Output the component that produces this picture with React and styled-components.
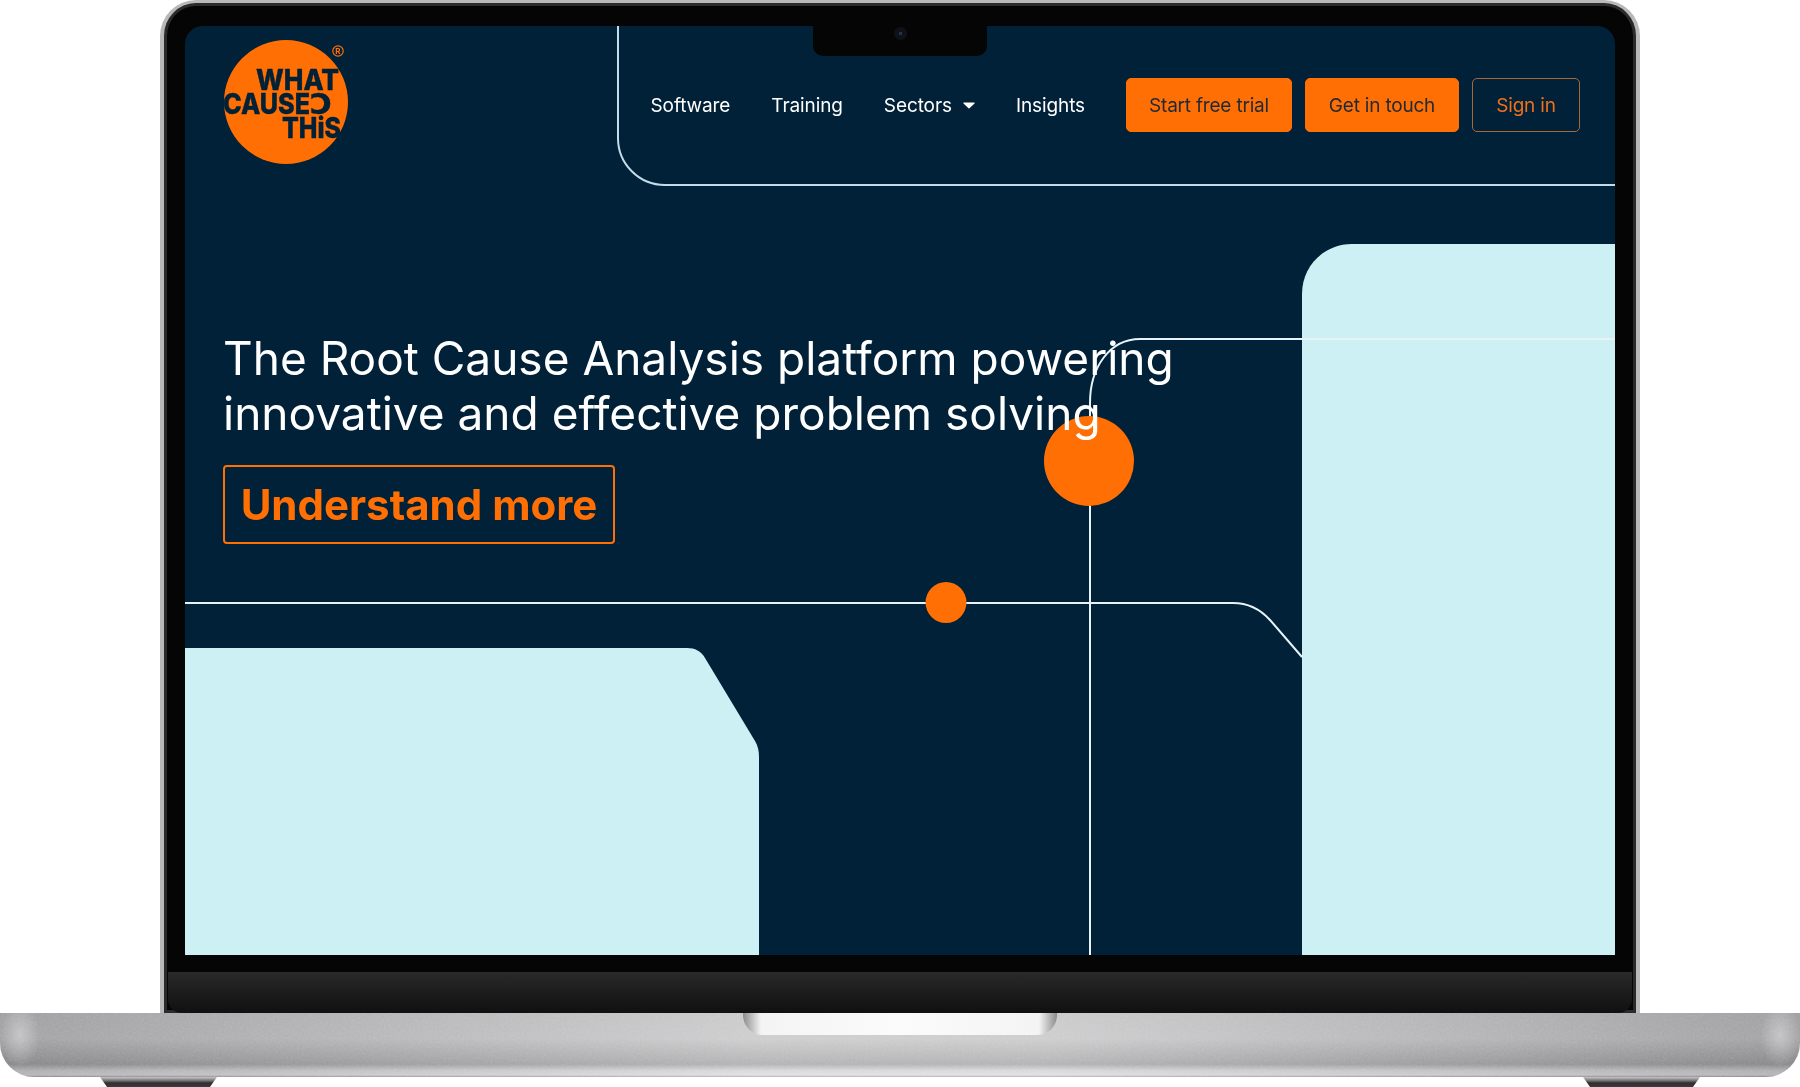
import * as React from "react"
import styled, { createGlobalStyle } from "styled-components"

const GlobalStyle = createGlobalStyle`
  html, body {
    background: #fff;
    margin: 0;
    padding: 0;
  }
`

const Page = styled.div`
  display: flex;
  flex-direction: column;
  font-family: "Inter", "Liberation Sans", sans-serif;
  font-variant-ligatures: none;
  height: 1087px;
  overflow: hidden;
  width: 1800px;
`

const Lid = styled.div`
  background: #050505;
  border: solid #b9b9bb;
  border-radius: 36px 36px 0 0;
  border-width: 3px 4px 0;
  box-shadow: inset 0 0 0 3px #2b2b2b;
  box-sizing: border-box;
  display: flex;
  flex-direction: column;
  height: 1013px;
  margin-left: 160px;
  overflow: hidden;
  padding-top: 23px;
  width: 1480px;
`

const Screen = styled.div`
  background: #012138;
  border-radius: 18px 18px 0 0;
  height: 929px;
  margin-left: 21px;
  overflow: hidden;
  position: relative;
  width: 1430px;
`

const Artwork = styled.svg`
  inset: 0;
  position: absolute;
`

const Notch = styled.div`
  align-items: flex-start;
  background: #050505;
  border-radius: 0 0 10px 10px;
  box-sizing: border-box;
  display: flex;
  height: 30px;
  justify-content: center;
  left: 628px;
  padding-top: 1px;
  position: absolute;
  top: 0;
  width: 174px;
`

const Camera = styled.span`
  background: radial-gradient(circle, #27304a 0 1.5px, #0f1118 2px 100%);
  border-radius: 50%;
  height: 13px;
  width: 13px;
`

const Header = styled.header`
  align-items: flex-start;
  display: flex;
  justify-content: space-between;
  padding: 14px 35px 0 39px;
  position: relative;
`

const Logo = styled.svg`
  display: block;
`

const Nav = styled.nav`
  align-items: center;
  display: flex;
  margin-top: 38px;
`

const NavLink = styled.a`
  align-items: center;
  color: #fff;
  display: flex;
  font-size: 19px;
  gap: 11px;
  letter-spacing: -0.1px;
  margin-right: 41px;
`

const Button = styled.a`
  align-items: center;
  background: ${(p) => (p.$outline ? "transparent" : "#ff6f03")};
  border: 1.5px solid ${(p) => (p.$outline ? "#a8693a" : "#ff6f03")};
  border-radius: 5px;
  box-sizing: border-box;
  color: ${(p) => (p.$outline ? "#f0701a" : "#1f2a38")};
  display: flex;
  font-size: 19px;
  height: 54px;
  justify-content: center;
  letter-spacing: -0.2px;
  margin-left: ${(p) => (p.$first ? "0" : "13px")};
  width: ${(p) => p.$width}px;
`

const Hero = styled.section`
  align-items: flex-start;
  display: flex;
  flex-direction: column;
  gap: 24px;
  margin-top: 167px;
  padding-left: 38px;
  position: relative;
`

const Title = styled.h1`
  color: #fff;
  font-size: 46px;
  font-weight: 400;
  line-height: 55px;
  margin: 0;
`

const CtaButton = styled.a`
  align-items: center;
  border: 2px solid #ff6f03;
  border-radius: 4px;
  box-sizing: border-box;
  color: #ff6f03;
  display: flex;
  font-size: 42px;
  font-weight: 700;
  height: 79px;
  justify-content: center;
  width: 392px;
`

const Hinge = styled.div`
  background: linear-gradient(180deg, #2a2a2a 0%, #1c1c1c 50%, #101010 100%);
  border-radius: 0 0 14px 14px;
  height: 41px;
  margin: 17px 4px 0;
`

const Base = styled.div`
  background:
    radial-gradient(ellipse 20px 32px at 20px 22px, rgba(222, 222, 224, 0.55), transparent),
    radial-gradient(ellipse 20px 32px at calc(100% - 20px) 22px, rgba(222, 222, 224, 0.55), transparent),
    linear-gradient(90deg, rgba(110, 110, 112, 0.3), rgba(255, 255, 255, 0.3) 42%, rgba(255, 255, 255, 0.3) 58%, rgba(110, 110, 112, 0.3)),
    linear-gradient(180deg, #b4b4b6 0%, #b8b8ba 40%, #9c9c9e 70%, #929296 80%, #c8c8ca 90%, #d4d4d6 97%, #8f8f92 100%);
  border-radius: 0 0 34px 34px;
  display: flex;
  flex-shrink: 0;
  height: 64px;
  justify-content: center;
  overflow: hidden;
  position: relative;
`

const BaseGrain = styled.svg`
  inset: 0;
  mix-blend-mode: soft-light;
  opacity: 0.45;
  position: absolute;
`

const Thumb = styled.div`
  background: linear-gradient(90deg, #8c8c8c 0, #f4f4f4 18px, #fbfbfb 50%, #f4f4f4 calc(100% - 18px), #8c8c8c 100%);
  border-radius: 0 0 20px 20px;
  height: 22px;
  position: relative;
  width: 314px;
`

const FeetRow = styled.div`
  display: flex;
  justify-content: space-between;
  padding: 0 100px;
`

const Foot = styled.div`
  background: linear-gradient(180deg, #c8c8c8 0%, #77777a 35%, #2f2f31 60%, #3a3a3c 100%);
  clip-path: polygon(0 0, 100% 0, 94% 100%, 6% 100%);
  height: 10px;
  width: 117px;
`

const navLinks = ["Software", "Training", "Sectors", "Insights"]

const WhatCausedThisLogo = () => (
  <Logo width="126" height="124" viewBox="0 0 126 124">
    <circle cx="62" cy="62" r="62" fill="#ff6f03" />
    <g fill="#012138" stroke="#012138" strokeWidth="0.4" fontFamily="Inter, sans-serif" fontWeight="800" fontSize="28.5">
      <text x="32" y="49.5" textLength="83" lengthAdjust="spacingAndGlyphs">WHAT</text>
      <text x="-1" y="73.5" textLength="87" lengthAdjust="spacingAndGlyphs">CAUSE</text>
      <text x="86" y="73.5" fontFamily="DejaVu Sans, sans-serif" fontWeight="700" fontSize="28" textLength="22" lengthAdjust="spacingAndGlyphs">Ɔ</text>
      <text x="58" y="97.5" textLength="59" lengthAdjust="spacingAndGlyphs">THiS</text>
    </g>
    <circle cx="114" cy="11" r="5.2" fill="none" stroke="#ff6f03" strokeWidth="1.2" />
    <text x="114" y="14" textAnchor="middle" fill="#ff6f03" fontFamily="Inter, sans-serif" fontWeight="700" fontSize="8">R</text>
  </Logo>
)

const Caret = () => (
  <svg width="12" height="7" viewBox="0 0 12 7">
    <path d="M1 .5h10c.6 0 .9.7.5 1.1L6.5 6.3c-.3.3-.7.3-1 0L.5 1.6C.1 1.2.4.5 1 .5z" fill="#fff" />
  </svg>
)

const App = () => (
  <Page>
    <GlobalStyle />
    <Lid>
      <Screen>
        {/* Background shapes and lines */}
        <Artwork width="1430" height="929" viewBox="0 0 1430 929">
          <path d="M1117 929V268c0-28 22-50 50-50h263v711z" fill="#cdf0f5" />
          <path d="M0 622h502c8 0 14 3 18 10l50 83c3 5 4 10 4 16v198H0z" fill="#cdf0f5" />
          <g fill="none" stroke="#e9f3f6" strokeWidth="2">
            <path d="M433 0v112c0 26 21 47 47 47h950" stroke="#c4dcea" />
            <path d="M1430 313H955c-30 0-50 28-50 64v552" />
            <path d="M0 577h1048c16 0 27 6 37 17l32 37" />
          </g>
          <circle cx="904" cy="435" r="45" fill="#ff6f03" />
          <circle cx="761" cy="576.5" r="20.5" fill="#ff6f03" />
        </Artwork>
        <Notch>
          <Camera />
        </Notch>
        <Header>
          <WhatCausedThisLogo />
          <Nav>
            {navLinks.map((link) => (
              <NavLink key={link}>
                {link}
                {link === "Sectors" && <Caret />}
              </NavLink>
            ))}
            <Button $first $width={166}>Start free trial</Button>
            <Button $width={154}>Get in touch</Button>
            <Button $outline $width={108}>Sign in</Button>
          </Nav>
        </Header>
        <Hero>
          <Title>
            The Root Cause Analysis platform powering
            <br />
            innovative and effective problem solving
          </Title>
          <CtaButton>Understand more</CtaButton>
        </Hero>
      </Screen>
      <Hinge />
    </Lid>
    <Base>
      {/* Brushed metal speckle */}
      <BaseGrain width="1800" height="64">
        <filter id="grain">
          <feTurbulence type="fractalNoise" baseFrequency="0.45" numOctaves="2" />
          <feColorMatrix type="saturate" values="0" />
        </filter>
        <rect width="1800" height="64" filter="url(#grain)" />
      </BaseGrain>
      <Thumb />
    </Base>
    <FeetRow>
      <Foot />
      <Foot />
    </FeetRow>
  </Page>
)

export default App
